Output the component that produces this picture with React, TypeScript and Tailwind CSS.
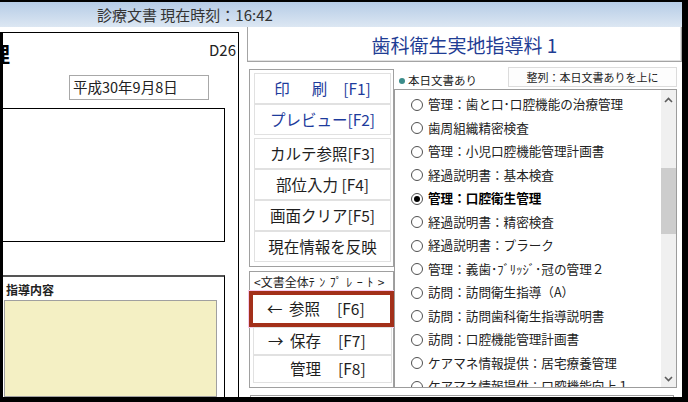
import React from 'react';

type BtnProps = { children: React.ReactNode; blue?: boolean; className?: string };

const Btn = ({ children, blue, className = '' }: BtnProps) => (
  <div
    className={`flex items-center justify-center border border-[#e1e1e1] bg-white text-[15.5px] leading-none ${
      blue ? 'text-[#1d3b9c]' : 'text-[#1e1e1e]'
    } ${className}`}
  >
    {children}
  </div>
);

const docs = [
  '管理：歯と口･口腔機能の治療管理',
  '歯周組織精密検査',
  '管理：小児口腔機能管理計画書',
  '経過説明書：基本検査',
  '管理：口腔衛生管理',
  '経過説明書：精密検査',
  '経過説明書：プラーク',
  '管理：義歯･ﾌﾞﾘｯｼﾞ･冠の管理２',
  '訪問：訪問衛生指導（A）',
  '訪問：訪問歯科衛生指導説明書',
  '訪問：口腔機能管理計画書',
  'ケアマネ情報提供：居宅療養管理',
  'ケアマネ情報提供：口腔機能向上１',
];

const Chevron = ({ down }: { down?: boolean }) => (
  <svg width="9" height="6" viewBox="0 0 9 6" className="block">
    <polyline
      points={down ? '1,1 4.5,4.5 8,1' : '1,5 4.5,1.5 8,5'}
      fill="none"
      stroke="#5c5c5c"
      strokeWidth="1.6"
    />
  </svg>
);

export default function App() {
  return (
    <div className="flex h-[402px] w-[688px] flex-col overflow-hidden bg-black pb-[5px] pr-[6px] pt-[2px] font-['Noto_Sans_CJK_JP','Noto_Sans',sans-serif]">
      {/* title bar */}
      <div className="h-[25px] shrink-0 bg-gradient-to-b from-[#b6cce6] to-[#dce7f3] pl-[97px] text-[15px] leading-[25px] text-[#333]">
        診療文書 現在時刻：16:42
      </div>

      <div className="flex min-h-0 flex-1 bg-white">
        {/* left document panel */}
        <div className="mt-[5px] flex w-[239px] shrink-0 flex-col overflow-hidden border-l-[3px] border-r border-t border-black">
          <div className="flex h-[36px] shrink-0 justify-between">
            <div className="-ml-[14px] mt-[10px] text-[21px] font-bold leading-none text-black">理</div>
            <div className="mr-[2px] mt-[9px] text-[15px] leading-none text-[#222]">D26</div>
          </div>
          <div className="ml-[66px] mt-[6px] flex h-[25px] w-[140px] shrink-0 items-center border border-[#a8a8a8] pl-[3px] text-[14.5px] leading-none text-[#222]">
            平成30年9月8日
          </div>
          <div className="mt-[8px] h-[134px] w-[222px] shrink-0 border border-l-0 border-black" />
          <div className="mt-[33px] flex min-h-0 w-[222px] flex-1 flex-col border-r border-t-2 border-r-black border-t-[#555]">
            <div className="ml-[3px] mt-[6px] text-[12px] font-bold leading-[14px] text-[#222]">指導内容</div>
            <div className="ml-[1px] mt-[3px] w-[213px] flex-1 border border-[#a0a0a0] bg-[#f4f0c4]" />
          </div>
        </div>

        {/* right area */}
        <div className="flex min-w-0 flex-1 flex-col">
          <div className="ml-[8px] flex h-[35px] shrink-0 items-center justify-center border border-t-0 border-[#a4a4a4] text-[19px] leading-none text-[#1f3d94] shadow-[inset_-1px_-1px_0_#e2e2e2]">
            歯科衛生実地指導料 1
          </div>

          <div className="ml-[10px] mt-[5px] flex h-[321px] shrink-0">
            {/* button column */}
            <div className="flex w-[145px] shrink-0 flex-col">
              <div className="mt-[2px] flex flex-col border border-[#a0a0a0] pb-[4px] pl-[4px] pr-[2px] pt-[3px]">
                <Btn blue className="h-[31px]">
                  印<span className="w-[22px]" />刷<span className="w-[16px]" />[F1]
                </Btn>
                <Btn blue className="h-[31px]">プレビュー[F2]</Btn>
                <div className="h-[3px]" />
                <Btn className="h-[31px]">カルテ参照[F3]</Btn>
                <Btn className="h-[31px]">部位入力 [F4]</Btn>
                <Btn className="h-[31px]">画面クリア[F5]</Btn>
                <Btn className="h-[31px]">現在情報を反映</Btn>
              </div>

              <div className="mt-[4px] flex h-[117px] flex-col border border-[#a0a0a0]">
                <div className="flex h-[19px] items-center whitespace-nowrap pl-[4px] text-[12px] leading-none text-[#222]">
                  &lt;文書全体<span className="tracking-[4.5px]">ﾃﾝﾌﾟﾚｰﾄ</span>&gt;
                </div>
                <div className="-ml-[1px] -mr-[1px] flex h-[36px] items-center border-[4px] border-[#a3301a] bg-white pl-[14px] text-[15.5px] leading-none text-[#1e1e1e] shadow-[0_0_0_1px_#f6c9ec]">
                  <span className="w-[22px]">←</span>参照<span className="w-[17px]" />[F6]
                </div>
                <div className="flex flex-col pl-[3px] pr-[1px]">
                  <Btn className="h-[28px] justify-start pl-[14px]">
                    <span className="w-[22px]">→</span>保存<span className="w-[17px]" />[F7]
                  </Btn>
                  <Btn className="h-[28px] justify-start pl-[14px]">
                    <span className="w-[22px]" />管理<span className="w-[17px]" />[F8]
                  </Btn>
                </div>
              </div>
            </div>

            {/* document list column */}
            <div className="mr-[5px] flex min-w-0 flex-1 flex-col">
              <div className="flex h-[22px] shrink-0 items-start">
                <div className="mt-[8px] flex items-center text-[11.5px] leading-none text-[#222]">
                  <span className="ml-[5px] mr-[3px] h-[6px] w-[6px] rounded-full bg-[#3b8c8a]" />
                  本日文書あり
                </div>
                <div className="ml-auto flex h-[20px] w-[169px] items-center justify-center border border-[#dcdcdc] bg-[#fdfdfd] text-[11px] leading-none text-[#222]">
                  整列：本日文書ありを上に
                </div>
              </div>

              <div className="flex min-h-0 flex-1 border border-[#9c9c9c] bg-white">
                <div className="min-w-0 flex-1 overflow-hidden pt-[3px]">
                  {docs.map((d, i) => {
                    const sel = i === 4;
                    return (
                      <div key={d} className="flex h-[23.5px] items-center whitespace-nowrap pl-[16px]">
                        <span className="flex h-[12px] w-[12px] shrink-0 items-center justify-center rounded-full border border-[#505050] bg-white">
                          {sel && <span className="h-[6px] w-[6px] rounded-full bg-black" />}
                        </span>
                        <span
                          className={`ml-[5px] text-[12.6px] leading-none ${
                            sel ? 'font-bold text-black' : 'text-[#222]'
                          }`}
                        >
                          {d}
                        </span>
                      </div>
                    );
                  })}
                </div>
                <div className="flex w-[15px] shrink-0 flex-col items-center bg-[#f0f0f0]">
                  <div className="flex h-[20px] items-center justify-center">
                    <Chevron />
                  </div>
                  <div className="mt-[58px] h-[66px] w-[15px] bg-[#cdcdcd]" />
                  <div className="flex-1" />
                  <div className="flex h-[17px] items-center justify-center">
                    <Chevron down />
                  </div>
                </div>
              </div>
            </div>
          </div>

          <div className="ml-[11px] mr-[8px] mt-[7px] flex-1 border border-b-0 border-[#a0a0a0]" />
        </div>
      </div>
    </div>
  );
}
